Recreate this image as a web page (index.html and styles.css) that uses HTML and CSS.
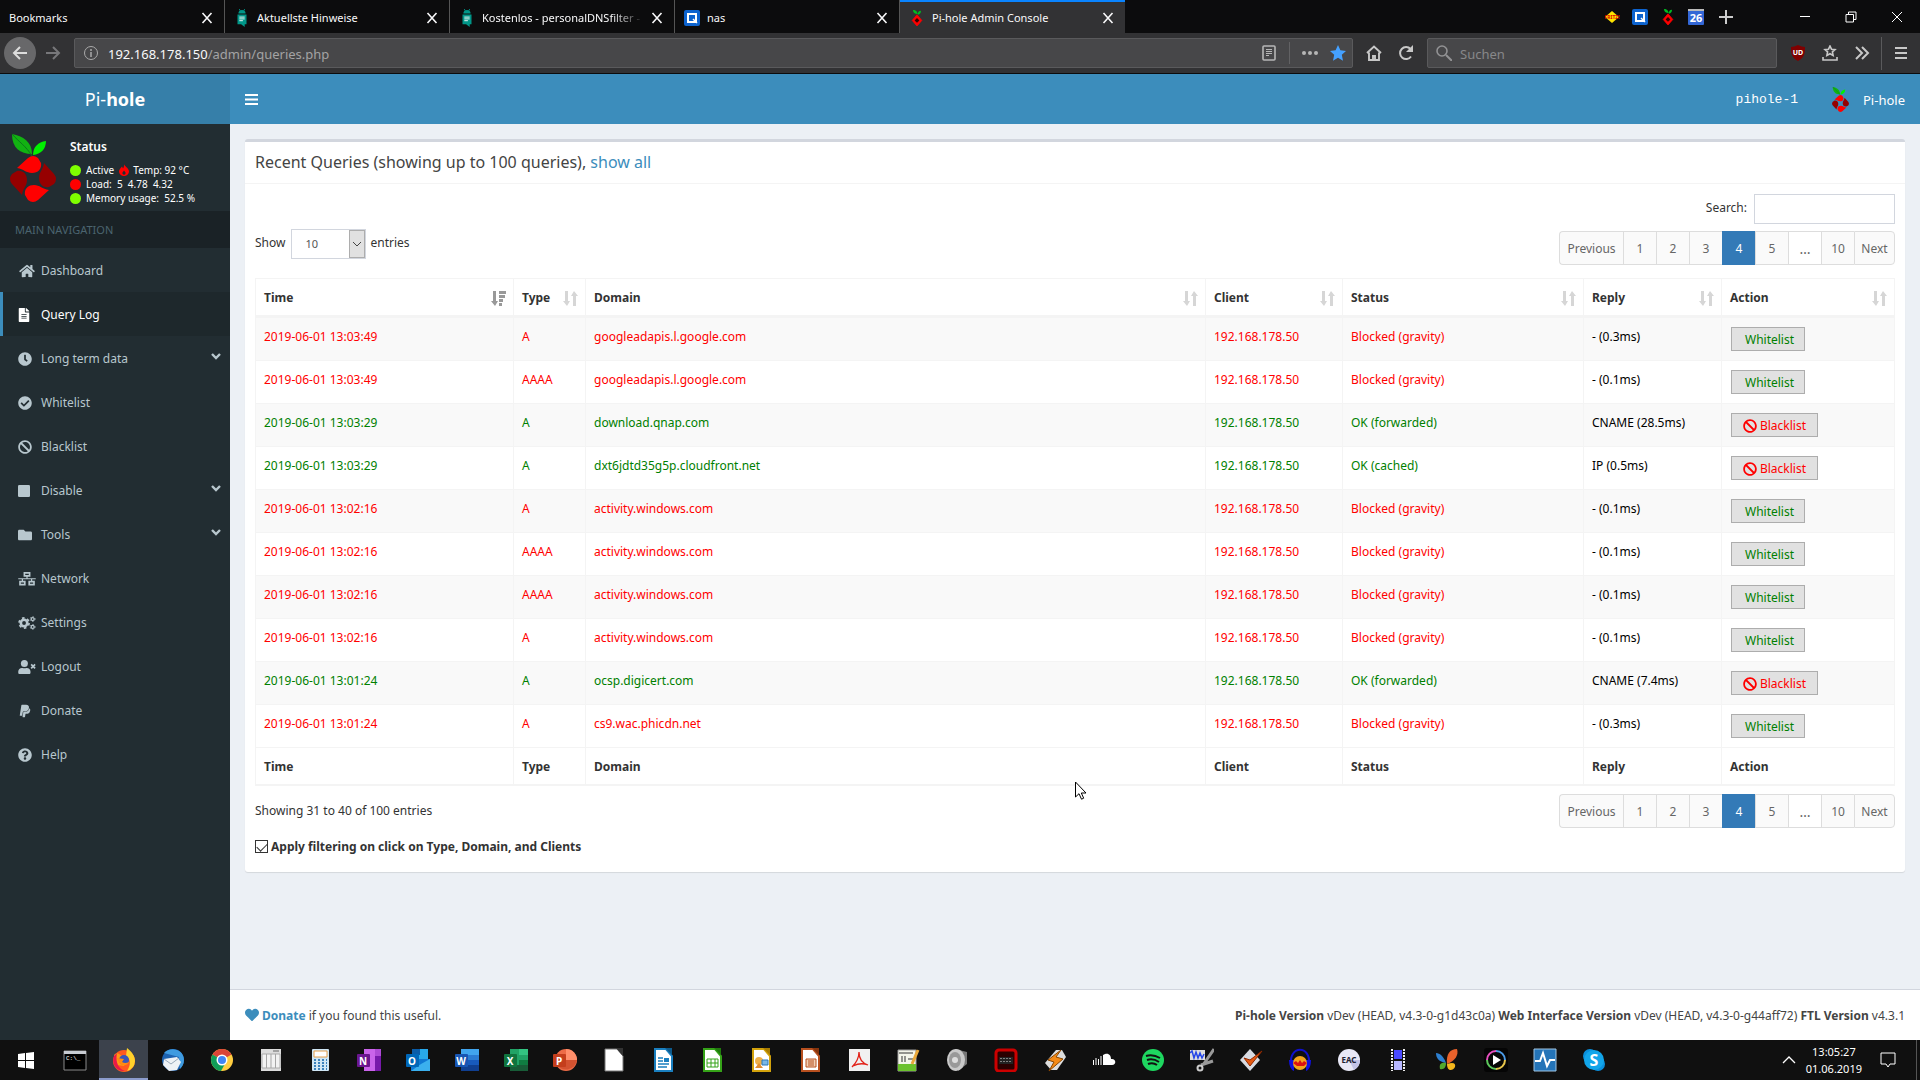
FILE: index.html
```html
<!DOCTYPE html>
<html lang="en">
<head>
  <meta charset="UTF-8">
  <title>Pi-hole Admin Console</title>
  <link rel="stylesheet" href="styles.css">
</head>
<body>
  <!-- shared icons -->
  <svg class="defs" width="0" height="0">
    <symbol id="x" viewBox="0 0 12 12"><path d="M1.500 1l9 10M10.500 1l-9 10" stroke="currentColor" stroke-width="1.600" fill="none"/></symbol>
    <symbol id="pihole" viewBox="0 0 46 68">
      <path d="M2 0c11 2 20 8 20 20C10 20 2 14 2 0z" fill="#12b212"/>
      <path d="M36 7c0 8-5 13-13 14C23 13 28 8 36 7z" fill="#00f000"/>
      <path d="M2 0c7 8 14 12 20 22" stroke="#0a7a1a" fill="none"/>
      <path id="petal" d="M7 34L18 24q5-4 10 0l3 5c1 6-3 10-9 10-6 0-8-4-15-5z" fill="#f00"/>
      <path d="M7 34L18 24q5-4 10 0l3 5c1 6-3 10-9 10-6 0-8-4-15-5z" fill="#960000" transform="rotate(90 23 45)"/>
      <path d="M7 34L18 24q5-4 10 0l3 5c1 6-3 10-9 10-6 0-8-4-15-5z" fill="#f00" transform="rotate(180 23 45)"/>
      <path d="M7 34L18 24q5-4 10 0l3 5c1 6-3 10-9 10-6 0-8-4-15-5z" fill="#960000" transform="rotate(270 23 45)"/>
    </symbol>
    <symbol id="pi-small" viewBox="0 0 16 20">
      <path d="M3 0c4 0 5 2 6 5-4 0-6-2-6-5zM13 1c0 3-1 4-4 5 0-3 1-5 4-5z" fill="#0b2"/>
      <path d="M8 6l6 7-6 7-6-7z" fill="#f00" stroke="#f00" stroke-linejoin="round"/>
      <path d="M8 10l3 3-3 3-3-3z" fill="#300"/>
    </symbol>
    <symbol id="droid" viewBox="0 0 12 20">
      <path d="M2 5q0-4 4-4t4 4zM1 6h10v11H9v3l-4-3H1z" fill="#009688"/>
      <path d="M3 0l1 2M9 0L8 2" stroke="#009688"/>
      <path d="M3 9h6M3 11h6M3 13h4" stroke="#fff"/>
    </symbol>
    <symbol id="qnap" viewBox="0 0 16 16">
      <rect width="16" height="16" rx="2" fill="#0d63ce"/>
      <path d="M4 4h8v8H4z" fill="none" stroke="#fff" stroke-width="2"/>
      <path d="M9 9l4 4" stroke="#fff" stroke-width="1.500"/>
    </symbol>
    <symbol id="home" viewBox="0 0 576 512"><path d="M280.370 148.260L96 300.110V464a16 16 0 0 0 16 16l112.060-.290a16 16 0 0 0 15.920-16V368a16 16 0 0 1 16-16h64a16 16 0 0 1 16 16v95.640a16 16 0 0 0 16 16.050L464 480a16 16 0 0 0 16-16V300L295.670 148.260a12.190 12.190 0 0 0-15.300 0zM571.600 251.470L488 182.560V44.050a12 12 0 0 0-12-12h-56a12 12 0 0 0-12 12v72.610L318.470 43a48 48 0 0 0-61 0L4.340 251.470a12 12 0 0 0-1.600 16.900l25.500 31A12 12 0 0 0 45.150 301l235.220-193.740a12.190 12.190 0 0 1 15.300 0L530.900 301a12 12 0 0 0 16.900-1.600l25.500-31a12 12 0 0 0-1.700-16.930z"/></symbol>
    <symbol id="file" viewBox="0 0 384 512"><path d="M224 136V0H24C10.700 0 0 10.700 0 24v464c0 13.300 10.700 24 24 24h336c13.300 0 24-10.700 24-24V160H248c-13.200 0-24-10.800-24-24zm64 236c0 6.600-5.400 12-12 12H108c-6.600 0-12-5.400-12-12v-8c0-6.600 5.400-12 12-12h168c6.600 0 12 5.400 12 12v8zm0-64c0 6.600-5.400 12-12 12H108c-6.600 0-12-5.400-12-12v-8c0-6.600 5.400-12 12-12h168c6.600 0 12 5.400 12 12v8zm0-72v8c0 6.600-5.400 12-12 12H108c-6.600 0-12-5.400-12-12v-8c0-6.600 5.400-12 12-12h168c6.600 0 12 5.400 12 12zm96-114.100v6.100H256V0h6.100c6.400 0 12.500 2.500 17 7l97.900 98c4.500 4.500 7 10.600 7 16.900z"/></symbol>
    <symbol id="clock" viewBox="0 0 512 512"><path d="M256 8C119 8 8 119 8 256s111 248 248 248 248-111 248-248S393 8 256 8zm92 313l-20 25a16 16 0 0 1-22 2l-67-49a40 40 0 0 1-15-31V112a16 16 0 0 1 16-16h32a16 16 0 0 1 16 16v144l58 42a16 16 0 0 1 2 23z"/></symbol>
    <symbol id="check" viewBox="0 0 512 512"><path d="M504 256c0 137-111 248-248 248S8 393 8 256 119 8 256 8s248 111 248 248zM227 387l184-184c6-6 6-16 0-22l-22-23c-7-6-17-6-23 0L216 308l-70-70c-6-6-16-6-23 0l-22 23c-6 6-6 16 0 22l104 104c6 6 16 6 22 0z"/></symbol>
    <symbol id="ban" viewBox="0 0 512 512"><path d="M256 8C119 8 8 119 8 256s111 248 248 248 248-111 248-248S393 8 256 8zm130 118c65 65 70 165 21 235L150 105c71-49 171-44 236 21zM126 386c-65-65-70-165-21-235l257 256c-71 49-171 44-236-21z"/></symbol>
    <symbol id="stop" viewBox="0 0 448 512"><rect y="32" width="448" height="448" rx="48"/></symbol>
    <symbol id="folder" viewBox="0 0 512 512"><path d="M464 128H272l-64-64H48C21 64 0 85 0 112v288c0 27 21 48 48 48h416c27 0 48-21 48-48V176c0-27-21-48-48-48z"/></symbol>
    <symbol id="network" viewBox="0 0 640 512"><path d="M224 32h192v112H224zM64 352h176v112H64zM400 352h176v112H400z" fill="none" stroke="currentColor" stroke-width="60"/><path d="M0 224h640v44H0zM298 150h44v90h-44zM130 250h44v100h-44zM466 250h44v100h-44z"/></symbol>
    <symbol id="cogs" viewBox="0 0 640 512">
      <g fill="none" stroke="currentColor">
        <circle cx="212" cy="256" r="118" stroke-width="96"/><circle cx="212" cy="256" r="184" stroke-width="62" stroke-dasharray="96 96"/>
        <circle cx="526" cy="112" r="54" stroke-width="44"/><circle cx="526" cy="112" r="86" stroke-width="34" stroke-dasharray="45 45"/>
        <circle cx="526" cy="400" r="54" stroke-width="44"/><circle cx="526" cy="400" r="86" stroke-width="34" stroke-dasharray="45 45"/>
      </g>
    </symbol>
    <symbol id="user-x" viewBox="0 0 640 512"><circle cx="224" cy="128" r="128"/><path d="M314 288h-17a174 174 0 0 1-146 0h-17C60 288 0 348 0 422v42c0 27 21 48 48 48h352c27 0 48-21 48-48v-42c0-74-60-134-134-134z"/><path d="M472 160l144 144M616 160L472 304" stroke="currentColor" stroke-width="62"/></symbol>
    <symbol id="paypal" viewBox="0 0 384 512"><path d="M111.400 295.900c-3.500 19.200-17.400 108.700-21.500 134-.3 1.800-1 2.500-3 2.500H12.300c-7.600 0-13.100-6.600-12.100-13.900L58.800 46.600c1.500-9.600 10.100-16.900 20-16.900 152.300 0 165.100-3.700 204 11.400 60.100 23.300 65.600 79.500 44 140.300-21.500 62.600-72.500 89.500-140.100 90.300-43.400.7-69.500-7-75.300 24.200zM357.100 152c-1.800-1.300-2.500-1.800-3 1.300-2 11.400-5.100 22.500-8.800 33.600-39.900 113.800-150.500 103.900-204.500 103.900-6.100 0-10.100 3.300-10.900 9.400-22.600 140.400-27.100 169.700-27.100 169.700-1 7.100 3.500 12.900 10.600 12.900h63.500c8.600 0 15.700-6.300 17.400-14.900.7-5.400-1.100 6.100 14.400-91.300 4.600-22 14.300-19.700 29.300-19.700 71 0 126.400-28.800 142.900-112.300 6.500-34.800 4.600-71.400-23.800-92.600z"/></symbol>
    <symbol id="question" viewBox="0 0 512 512"><path d="M504 256c0 137-111 248-248 248S8 393 8 256C8 119 119 8 256 8s248 111 248 248zM263 90c-55 0-90 23-117 64-4 5-2 12 3 16l35 26c5 4 12 3 16-2 18-23 30-36 57-36 21 0 46 13 46 33 0 15-12 23-33 34-23 14-54 30-54 71v4c0 7 5 12 12 12h56c7 0 12-5 12-12v-1c0-29 83-30 83-107 0-58-60-102-116-102zM256 338c-25 0-46 21-46 46s21 46 46 46 46-21 46-46-21-46-46-46z"/></symbol>
    <symbol id="heart" viewBox="0 0 512 512"><path d="M462 63C407 16 326 24 276 76l-20 20-20-20C186 24 105 16 50 63c-63 53-66 149-10 207l193 200c13 13 33 13 46 0l193-200c56-58 53-154-10-207z"/></symbol>
    <symbol id="chevron" viewBox="0 0 10 8"><path d="M1 2l4 4 4-4" stroke="currentColor" stroke-width="2.400" fill="none"/></symbol>
    <symbol id="sort" viewBox="0 0 15 15"><path d="M2 0h3v10h2l-3 5-4-5h2zM10 15h3V5h2l-4-5-3 5h2z"/></symbol>
    <symbol id="sort-desc" viewBox="0 0 15 15"><path d="M2 0h3v10h2l-3 5-4-5h2zM8 0h7v3H8zM8 4h6v3H8zM8 8h4v3H8zM8 12h3v3H8z"/></symbol>
  </svg>

  <div class="tabs">
    <div class="tab"><span>Bookmarks</span><button aria-label="Close tab"><svg><use href="#x"/></svg></button></div>
    <div class="tab"><svg class="fav droid"><use href="#droid"/></svg><span>Aktuellste Hinweise</span><button aria-label="Close tab"><svg><use href="#x"/></svg></button></div>
    <div class="tab"><svg class="fav droid"><use href="#droid"/></svg><span class="fade">Kostenlos - personalDNSfilter -</span><button aria-label="Close tab"><svg><use href="#x"/></svg></button></div>
    <div class="tab"><svg class="fav"><use href="#qnap"/></svg><span>nas</span><button aria-label="Close tab"><svg><use href="#x"/></svg></button></div>
    <div class="tab active"><svg class="fav"><use href="#pi-small"/></svg><span>Pi-hole Admin Console</span><button aria-label="Close tab"><svg><use href="#x"/></svg></button></div>
    <div class="pinned">
      <svg viewBox="0 0 16 16"><path d="M8 2l7 6-7 6-7-6z" fill="#ffe400"/><text x="8" y="10" class="t-fritz">FRITZ!</text></svg>
      <svg><use href="#qnap"/></svg>
      <svg><use href="#pi-small"/></svg>
      <svg viewBox="0 0 16 16"><rect width="16" height="16" rx="1" fill="#3367d6"/><path d="M0 0h16v2H0z" fill="#bbb"/><text x="8" y="13" class="t-cal">26</text></svg>
      <button aria-label="New tab"><svg viewBox="0 0 16 16"><path d="M8 1v14M1 8h14" stroke="#ccc" stroke-width="2"/></svg></button>
    </div>
    <div class="winctl">
      <button aria-label="Minimize"><svg viewBox="0 0 12 12"><path d="M1 5.500h10" stroke="#fff"/></svg></button>
      <button aria-label="Restore"><svg viewBox="0 0 12 12"><path d="M1 3.500h7.500v7.500H1zM3.500 3.500V1H11v7.500H8.500" fill="none" stroke="#fff"/></svg></button>
      <button aria-label="Close"><svg viewBox="0 0 12 12"><path d="M1 1l10 10M11 1L1 11" stroke="#fff"/></svg></button>
    </div>
  </div>

  <div class="toolbar">
    <button class="back" aria-label="Back"><svg viewBox="0 0 16 16"><path d="M15 8H2M8 2L2 8l6 6" fill="none" stroke="#ddd" stroke-width="2"/></svg></button>
    <button class="forward" aria-label="Forward"><svg viewBox="0 0 16 16"><path d="M1 8h13M8 2l6 6-6 6" fill="none" stroke="#77777a" stroke-width="2"/></svg></button>
    <div class="urlbar">
      <svg viewBox="0 0 16 16"><circle cx="8" cy="8" r="6.500" fill="none" stroke="#aaa"/><path d="M8 4v2M8 7v5" stroke="#aaa" stroke-width="1.500"/></svg>
      <span class="url"><b>192.168.178.150</b>/admin/queries.php</span>
      <svg class="reader" viewBox="0 0 16 16"><rect x="2" y="1" width="12" height="14" rx="1" fill="none" stroke="#b6b6b6" stroke-width="1.600"/><path d="M5 4.500h6M5 6.500h6M5 8.500h6M5 10.500h3" stroke="#b6b6b6"/></svg>
      <i class="sep"></i>
      <svg class="dots" viewBox="0 0 16 16"><g fill="#b6b6b6"><circle cx="2" cy="8" r="2"/><circle cx="8" cy="8" r="2"/><circle cx="14" cy="8" r="2"/></g></svg>
      <svg viewBox="0 0 16 16"><path d="M8 0l2.400 5.300 5.600.6-4.200 3.900 1.200 6L8 12.800 3 15.800l1.200-6L0 5.900l5.600-.6z" fill="#45a1ff"/></svg>
    </div>
    <button class="tool" aria-label="Home"><svg viewBox="0 0 16 16"><path d="M1 8l7-6.500L15 8M3 7.500V15h10V7.500M7 15v-4h2v4" fill="none" stroke="#c8c8c8" stroke-width="1.900"/></svg></button>
    <button class="tool" aria-label="Reload"><svg viewBox="0 0 16 16"><path d="M13 11.500A6 6 0 1 1 12.500 4" fill="none" stroke="#c8c8c8" stroke-width="2"/><path d="M15 0v7H8z" fill="#c8c8c8"/></svg></button>
    <label class="search">
      <svg viewBox="0 0 16 16"><circle cx="6" cy="6" r="5" fill="none" stroke="#929294" stroke-width="1.600"/><path d="M10 10l6 6" stroke="#929294" stroke-width="2"/></svg>
      <input type="text" placeholder="Suchen">
    </label>
    <div class="ext">
      <svg viewBox="0 0 16 16"><path d="M8 0q4 2 7 2c0 7-1 11-7 14C2 13 1 9 1 2q3 0 7-2z" fill="#800000"/><text x="8" y="10" class="t-ub">UD</text></svg>
      <svg viewBox="0 0 16 16"><path d="M8 1l1.500 3.200 3.500.4-2.600 2.300.7 3.500L8 8.700l-3.100 1.700.7-3.500L3 4.600l3.500-.4zM1 12v3h14v-3" fill="none" stroke="#c8c8c8" stroke-width="1.600"/></svg>
      <svg viewBox="0 0 16 16"><path d="M2 2l6 6-6 6M8 2l6 6-6 6" fill="none" stroke="#c8c8c8" stroke-width="2"/></svg>
    </div>
    <button class="menu" aria-label="Menu"><svg viewBox="0 0 16 16"><path d="M2 3h12M2 8h12M2 13h12" stroke="#c8c8c8" stroke-width="2"/></svg></button>
  </div>

  <div class="wrapper">
    <aside class="sidebar">
      <a href="#" class="logo">Pi-<b>hole</b></a>
      <div class="user-panel">
        <svg class="pi"><use href="#pihole"/></svg>
        <div class="info">
          <p>Status</p>
          <div><i class="dot green"></i>Active <svg class="fire" viewBox="0 0 10 12"><path d="M5 0c0 2 5 4 5 7.500A4.600 4.600 0 0 1 5 12 4.600 4.600 0 0 1 0 7.500C0 5 2 4 3 2.500l1 2C5 3 5 2 5 0z" fill="#f00"/><path d="M5 6.500l1.500 2a1.600 1.600 0 1 1-3 0z" fill="#222d32"/></svg> Temp: 92 °C</div>
          <div><i class="dot red"></i>Load:&nbsp; 5&nbsp; 4.78&nbsp; 4.32</div>
          <div><i class="dot green"></i>Memory usage:&nbsp; 52.5 %</div>
        </div>
      </div>
      <div class="nav-title">MAIN NAVIGATION</div>
      <nav>
        <a href="#"><svg class="wide"><use href="#home"/></svg>Dashboard</a>
        <a href="#" class="active"><svg class="thin"><use href="#file"/></svg>Query Log</a>
        <a href="#"><svg><use href="#clock"/></svg>Long term data<svg class="more"><use href="#chevron"/></svg></a>
        <a href="#"><svg><use href="#check"/></svg>Whitelist</a>
        <a href="#"><svg><use href="#ban"/></svg>Blacklist</a>
        <a href="#"><svg class="thin"><use href="#stop"/></svg>Disable<svg class="more"><use href="#chevron"/></svg></a>
        <a href="#"><svg><use href="#folder"/></svg>Tools<svg class="more"><use href="#chevron"/></svg></a>
        <a href="#"><svg class="wide"><use href="#network"/></svg>Network</a>
        <a href="#"><svg class="wide"><use href="#cogs"/></svg>Settings</a>
        <a href="#"><svg class="wide"><use href="#user-x"/></svg>Logout</a>
        <a href="#"><svg><use href="#paypal"/></svg>Donate</a>
        <a href="#"><svg><use href="#question"/></svg>Help</a>
      </nav>
    </aside>

    <div class="page">
      <header class="navbar">
        <button class="toggle" aria-label="Toggle navigation"><svg viewBox="0 0 13 11"><path d="M0 1h13M0 5.500h13M0 10h13" stroke="#fff" stroke-width="2"/></svg></button>
        <code>pihole-1</code>
        <a href="#" class="account"><svg><use href="#pihole"/></svg>Pi-hole</a>
      </header>

      <main class="content">
        <section class="box">
          <h3>Recent Queries (showing up to 100 queries), <a href="#">show all</a></h3>
          <div class="box-body">
            <div class="controls">
              <div class="length">
                <label for="len">Show</label>
                <span class="select"><select id="len"><option>10</option><option>25</option><option>100</option></select><i><svg viewBox="0 0 10 8"><path d="M1 2l4 4 4-4" stroke="#444" fill="none"/></svg></i></span>
                <label for="len">entries</label>
              </div>
              <div class="right">
                <label class="filter">Search:<input type="search"></label>
                <div class="pagination">
                  <a href="#" class="end">Previous</a><a href="#">1</a><a href="#">2</a><a href="#">3</a><a href="#" class="current">4</a><a href="#">5</a><span>…</span><a href="#">10</a><a href="#" class="end">Next</a>
                </div>
              </div>
            </div>

            <table>
              <colgroup><col class="c-time"><col class="c-type"><col><col class="c-client"><col class="c-status"><col class="c-reply"><col class="c-action"></colgroup>
              <thead>
                <tr>
                  <th><div>Time<svg class="sorted"><use href="#sort-desc"/></svg></div></th>
                  <th><div>Type<svg><use href="#sort"/></svg></div></th>
                  <th><div>Domain<svg><use href="#sort"/></svg></div></th>
                  <th><div>Client<svg><use href="#sort"/></svg></div></th>
                  <th><div>Status<svg><use href="#sort"/></svg></div></th>
                  <th><div>Reply<svg><use href="#sort"/></svg></div></th>
                  <th><div>Action<svg><use href="#sort"/></svg></div></th>
                </tr>
              </thead>
              <tbody>
                <tr class="blocked"><td>2019-06-01 13:03:49</td><td>A</td><td>googleadapis.l.google.com</td><td>192.168.178.50</td><td>Blocked (gravity)</td><td>- (0.3ms)</td><td><button class="white">Whitelist</button></td></tr>
                <tr class="blocked"><td>2019-06-01 13:03:49</td><td>AAAA</td><td>googleadapis.l.google.com</td><td>192.168.178.50</td><td>Blocked (gravity)</td><td>- (0.1ms)</td><td><button class="white">Whitelist</button></td></tr>
                <tr class="ok"><td>2019-06-01 13:03:29</td><td>A</td><td>download.qnap.com</td><td>192.168.178.50</td><td>OK (forwarded)</td><td>CNAME (28.5ms)</td><td><button class="black"><svg><use href="#ban"/></svg>Blacklist</button></td></tr>
                <tr class="ok"><td>2019-06-01 13:03:29</td><td>A</td><td>dxt6jdtd35g5p.cloudfront.net</td><td>192.168.178.50</td><td>OK (cached)</td><td>IP (0.5ms)</td><td><button class="black"><svg><use href="#ban"/></svg>Blacklist</button></td></tr>
                <tr class="blocked"><td>2019-06-01 13:02:16</td><td>A</td><td>activity.windows.com</td><td>192.168.178.50</td><td>Blocked (gravity)</td><td>- (0.1ms)</td><td><button class="white">Whitelist</button></td></tr>
                <tr class="blocked"><td>2019-06-01 13:02:16</td><td>AAAA</td><td>activity.windows.com</td><td>192.168.178.50</td><td>Blocked (gravity)</td><td>- (0.1ms)</td><td><button class="white">Whitelist</button></td></tr>
                <tr class="blocked"><td>2019-06-01 13:02:16</td><td>AAAA</td><td>activity.windows.com</td><td>192.168.178.50</td><td>Blocked (gravity)</td><td>- (0.1ms)</td><td><button class="white">Whitelist</button></td></tr>
                <tr class="blocked"><td>2019-06-01 13:02:16</td><td>A</td><td>activity.windows.com</td><td>192.168.178.50</td><td>Blocked (gravity)</td><td>- (0.1ms)</td><td><button class="white">Whitelist</button></td></tr>
                <tr class="ok"><td>2019-06-01 13:01:24</td><td>A</td><td>ocsp.digicert.com</td><td>192.168.178.50</td><td>OK (forwarded)</td><td>CNAME (7.4ms)</td><td><button class="black"><svg><use href="#ban"/></svg>Blacklist</button></td></tr>
                <tr class="blocked"><td>2019-06-01 13:01:24</td><td>A</td><td>cs9.wac.phicdn.net</td><td>192.168.178.50</td><td>Blocked (gravity)</td><td>- (0.3ms)</td><td><button class="white">Whitelist</button></td></tr>
              </tbody>
              <tfoot>
                <tr><th>Time</th><th>Type</th><th>Domain</th><th>Client</th><th>Status</th><th>Reply</th><th>Action</th></tr>
              </tfoot>
            </table>

            <div class="below">
              <span>Showing 31 to 40 of 100 entries</span>
              <div class="pagination">
                <a href="#" class="end">Previous</a><a href="#">1</a><a href="#">2</a><a href="#">3</a><a href="#" class="current">4</a><a href="#">5</a><span>…</span><a href="#">10</a><a href="#" class="end">Next</a>
              </div>
            </div>
            <label class="apply"><input type="checkbox" checked>Apply filtering on click on Type, Domain, and Clients</label>
          </div>
        </section>
      </main>

      <footer>
        <div><a href="#"><svg><use href="#heart"/></svg><b>Donate</b></a> if you found this useful.</div>
        <div><b>Pi-hole Version</b> vDev (HEAD, v4.3-0-g1d43c0a) <b>Web Interface Version</b> vDev (HEAD, v4.3-0-g44aff72) <b>FTL Version</b> v4.3.1</div>
      </footer>
    </div>
  </div>

  <div class="taskbar">
    <button aria-label="Start"><svg viewBox="0 0 24 24"><path d="M4 6l7-1v7H4zM12 5l8-1v8h-8zM4 13h7v7l-7-1zM12 13h8v8l-8-1z" fill="#fff"/></svg></button>
    <button aria-label="Command prompt"><svg viewBox="0 0 24 24"><path d="M1 3h22v19H1z" fill="#000" stroke="#8a8a8a"/><path d="M1 3h22v3H1z" fill="#c8ccd2"/><text x="3" y="12" class="t-cmd">C:\_</text></svg></button>
    <button aria-label="Firefox" class="running"><svg viewBox="0 0 24 24"><circle cx="12" cy="13" r="11" fill="#ff5a1f"/><path d="M15 0c5 4 8 8 8 13a11 11 0 0 1-8 10c4-6 4-12-1-15z" fill="#ffd12b"/><path d="M2 7c3-3 4-2 8 1l5 3-3 7-7-1z" fill="#ff9a14"/><circle cx="12" cy="12" r="5" fill="#3a56b8"/><path d="M5 10l7 1-2 3q3 2 7 0c-1 4-9 6-12-4z" fill="#ff8a10"/><path d="M2 8c-3 8 3 16 11 15C7 21 3 15 5 5z" fill="#e8194a"/></svg></button>
    <button aria-label="Thunderbird"><svg viewBox="0 0 24 24"><circle cx="12" cy="12" r="11" fill="#1d62b0"/><path d="M3 5C9-2 23 1 23 12c0 4-2 7-4 9l-1-12z" fill="#3f9be0"/><path d="M3 11l13-2 4 5-4 8-8 1-6-6z" fill="#eef2f6"/><path d="M3 11l7 5 8-6" fill="none" stroke="#9ab"/></svg></button>
    <button aria-label="Chrome"><svg viewBox="0 0 24 24"><circle cx="12" cy="12" r="11" fill="#ffcd40"/><path d="M12 12L2.500 6.500a11 11 0 0 1 19 0z" fill="#db4437"/><path d="M12 12L2.500 6.500A11 11 0 0 0 11 23l5-9z" fill="#0f9d58"/><circle cx="12" cy="12" r="5.500" fill="#fff"/><circle cx="12" cy="12" r="4" fill="#4285f4"/></svg></button>
    <button aria-label="NAS finder"><svg viewBox="0 0 24 24"><path d="M2 1h20v22H2z" fill="#dcdcdc"/><path d="M3 6h18v14H3z" fill="#f2f2f2" stroke="#aaa"/><path d="M7.500 6v14M12 6v14M16.500 6v14" stroke="#a5a5a5"/><path d="M14 3h6" stroke="#666"/></svg></button>
    <button aria-label="Calculator"><svg viewBox="0 0 24 24"><rect x="4" y="1" width="17" height="22" rx="1" fill="#cfe6f5"/><path d="M6 3h13v6H6z" fill="#fff" stroke="#e6a04d"/><path d="M6 12h13M6 15h13M6 18h13M6 21h13" stroke="#3b82bd" stroke-width="2" stroke-dasharray="2 2"/></svg></button>
    <button aria-label="OneNote"><svg viewBox="0 0 24 24"><path d="M7 1h17v22H7z" fill="#ca64ea"/><path d="M18 1h6v22h-6z" fill="#ae4bd5"/><path d="M18 8h6v15h-6z" fill="#7719aa"/><rect y="6" width="13" height="13" rx="1" fill="#6b168f"/><text x="6" y="17" class="t-app">N</text></svg></button>
    <button aria-label="Outlook"><svg viewBox="0 0 24 24"><path d="M6 1h16v10H6z" fill="#28a8ea"/><path d="M6 1h8v6H6z" fill="#0a5ca8"/><path d="M5 11h19v12H5z" fill="#0f78d4"/><path d="M5 23l10-7 9-5v12z" fill="#3bb0ee"/><rect y="6" width="13" height="13" rx="1" fill="#0067b8"/><text x="6" y="17" class="t-app">O</text></svg></button>
    <button aria-label="Word"><svg viewBox="0 0 24 24"><path d="M6 1h18v6H6z" fill="#41a5ee"/><path d="M6 7h18v5H6z" fill="#2b7cd3"/><path d="M6 12h18v5H6z" fill="#185abd"/><path d="M6 17h18v6H6z" fill="#103f91"/><rect y="6" width="13" height="13" rx="1" fill="#1855b3"/><text x="6" y="17" class="t-app">W</text></svg></button>
    <button aria-label="Excel"><svg viewBox="0 0 24 24"><path d="M6 1h18v22H6z" fill="#21a366"/><path d="M15 1h9v6h-9z" fill="#33c481"/><path d="M15 12h9v11h-9z" fill="#107c41"/><path d="M6 17h18v6H6z" fill="#185c37"/><rect y="6" width="13" height="13" rx="1" fill="#10743e"/><text x="6" y="17" class="t-app">X</text></svg></button>
    <button aria-label="PowerPoint"><svg viewBox="0 0 24 24"><circle cx="13" cy="12" r="11" fill="#ed6c47"/><path d="M13 1a11 11 0 0 1 11 11H13z" fill="#ff8f6b"/><path d="M3 12h21a11 11 0 0 1-21 3z" fill="#d35230"/><rect y="6" width="13" height="13" rx="1" fill="#c43e1c"/><text x="6" y="17" class="t-app">P</text></svg></button>
    <button aria-label="LibreOffice"><svg viewBox="0 0 24 24"><path d="M3 1h12l6 7v15H3z" fill="#fff" stroke="#777"/><path d="M14 0h7v8z" fill="#333"/></svg></button>
    <button aria-label="Writer"><svg viewBox="0 0 24 24"><path d="M4 1h11l6 7v15H4z" fill="#fff" stroke="#1a7fbf" stroke-width="2"/><path d="M14 0h7v7z" fill="#0d5a8c"/><path d="M7 10h5M7 13h5M7 16h11M7 19h9" stroke="#1a7fbf" stroke-width="1.500"/><path d="M13 10h5v4h-5z" fill="#1a7fbf"/></svg></button>
    <button aria-label="Calc"><svg viewBox="0 0 24 24"><path d="M4 1h11l6 7v15H4z" fill="#fff" stroke="#35a218" stroke-width="2"/><path d="M14 0h7v7z" fill="#1f7a0c"/><path d="M7 11h11v8H7zM7 15h11M11 11v8M15 11v8" stroke="#35a218" fill="none"/></svg></button>
    <button aria-label="Draw"><svg viewBox="0 0 24 24"><path d="M4 1h11l6 7v15H4z" fill="#fff" stroke="#d2a20c" stroke-width="2"/><path d="M14 0h7v7z" fill="#a87c00"/><circle cx="10" cy="13" r="4" fill="#eeb049"/><path d="M6 20l4-5 4 5z" fill="#e38d2c"/><path d="M13 12h6v5h-6z" fill="#7ab8e6" stroke="#2c79b5"/></svg></button>
    <button aria-label="Impress"><svg viewBox="0 0 24 24"><path d="M4 1h11l6 7v15H4z" fill="#fff" stroke="#b8501f" stroke-width="2"/><path d="M14 0h7v7z" fill="#86340c"/><path d="M8 11h10v8H8z" fill="#f1cfb5" stroke="#b8501f"/><path d="M10 13h6M10 15h6M10 17h6" stroke="#b8501f"/></svg></button>
    <button aria-label="PDF reader"><svg viewBox="0 0 24 24"><path d="M2 1h21v22H2z" fill="#f1f1f1"/><path d="M5 19c4-4 7-9 7-15 0 6 3 11 9 13-5-2-11-1-15 1" fill="none" stroke="#e2231a" stroke-width="1.300"/></svg></button>
    <button aria-label="Editor"><svg viewBox="0 0 24 24"><path d="M2 2h18v21H2z" fill="#f4f6ea" stroke="#999"/><path d="M2 16h18v7H2z" fill="#6cc22e"/><path d="M3 5h14M6 8v6M9 8v6M12 11h5" stroke="#333"/><path d="M22 2l-6 14" stroke="#e9a83a" stroke-width="3"/></svg></button>
    <button aria-label="Speaker"><svg viewBox="0 0 24 24"><path d="M10 1l12 3v12l-9 7z" fill="#777"/><ellipse cx="11" cy="12" rx="9" ry="11" fill="#c9c9c9"/><ellipse cx="10" cy="12" rx="6" ry="8" fill="#999"/><circle cx="10" cy="12" r="3" fill="#ddd"/></svg></button>
    <button aria-label="Recorder"><svg viewBox="0 0 24 24"><rect x="2" y="2" width="20" height="21" rx="3" fill="#2a0000" stroke="#c00" stroke-width="3"/><path d="M5 9h14v7H5z" fill="#222"/><path d="M6 10.500h12M6 13.500h12" stroke="#aaa" stroke-width=".700" stroke-dasharray="2 1"/></svg></button>
    <button aria-label="Winamp"><svg viewBox="0 0 24 24"><path d="M13 2h6l4 7-9 13H8l-6-7z" fill="#ddd"/><path d="M18 2L5 12l6 2-5 9 14-12-7-2z" fill="#f58a16" stroke="#8a4600"/></svg></button>
    <button aria-label="SoundCloud"><svg viewBox="0 0 24 24"><path d="M11 7c5-3 8 0 8 4 5-1 6 6 1 6h-9z" fill="#fff"/><path d="M1.500 12v5M4 10v7M6.500 11v6M9 8v9" stroke="#fff"/></svg></button>
    <button aria-label="Spotify"><svg viewBox="0 0 24 24"><circle cx="12" cy="12" r="11" fill="#1ed760"/><path d="M5 8q7-2 14 2M6 12q6-2 12 2M7 16q5-2 9 1" fill="none" stroke="#111" stroke-width="2"/></svg></button>
    <button aria-label="Wave cutter"><svg viewBox="0 0 24 24"><path d="M0 2h15v10H0z" fill="#ddd"/><path d="M0 5l2-2 2 7 2-6 2 6 2-5 2 5 2-4" fill="none" stroke="#2445e8" stroke-width="1.500"/><path d="M24 1L13 17M23 13l-12 4" stroke="#999" stroke-width="3"/><circle cx="10" cy="20" r="2.500" fill="none" stroke="#ccc" stroke-width="2"/></svg></button>
    <button aria-label="Checker"><svg viewBox="0 0 24 24"><path d="M11 1l10 11-10 11L1 12z" fill="#d8dbe2"/><path d="M5 10l6 8L23 3 11 12z" fill="#e65a12" stroke="#8f2800"/></svg></button>
    <button aria-label="Audacity"><svg viewBox="0 0 24 24"><path d="M3 16C1-3 23-3 21 16" fill="none" stroke="#11c" stroke-width="2"/><path d="M1 12h5v11q-5-2-5-11zM23 12h-5v11q5-2 5-11z" fill="#11d"/><circle cx="12" cy="15" r="7" fill="#f4a51c"/><path d="M5 15l3-2 2 2 2-3 2 3 2-2 3 2-3 3H9z" fill="#d11"/></svg></button>
    <button aria-label="EAC"><svg viewBox="0 0 24 24"><circle cx="12" cy="12" r="11" fill="#e8e8f6"/><path d="M12 12l5 10a11 11 0 0 0 6-10z" fill="#c3c3e6"/><text x="12" y="15" class="t-eac">EAC</text></svg></button>
    <button aria-label="Video"><svg viewBox="0 0 24 24"><path d="M5 1h14v22H5z" fill="#111"/><path d="M8 2h8v9H8z" fill="#4a4aff"/><path d="M8 13h8v9H8z" fill="#b6b6ff"/><path d="M6 1v22M18 1v22" stroke="#eee" stroke-width="2" stroke-dasharray="2 1"/></svg></button>
    <button aria-label="MSN"><svg viewBox="0 0 24 24"><path d="M11 15C9 9 5 5 1 5c0 6 4 9 10 10z" fill="#2d7fd0"/><path d="M12 16C11 6 15 1 22 1c2 6-2 12-10 15z" fill="#e9622b"/><path d="M11 15c-5-1-7 1-6 6 4 1 6-2 6-6z" fill="#53a82c"/><path d="M12 16c6-2 9-1 8 3-2 4-8 5-8-3z" fill="#f5b71c"/></svg></button>
    <button aria-label="Media player"><svg viewBox="0 0 24 24"><rect width="24" height="24" rx="3" fill="#050505"/><path d="M3 12a9 9 0 0 1 9-9" stroke="#e84fc0" stroke-width="2" fill="none"/><path d="M12 3a9 9 0 0 1 9 9" stroke="#4b9be8" stroke-width="2" fill="none"/><path d="M21 12a9 9 0 0 1-9 9" stroke="#e8c54b" stroke-width="2" fill="none"/><path d="M12 21a9 9 0 0 1-9-9" stroke="#5cc85c" stroke-width="2" fill="none"/><path d="M9 7l8 5-8 5z" fill="#fff"/></svg></button>
    <button aria-label="Monitor"><svg viewBox="0 0 24 24"><path d="M1 1h22v22H1z" fill="#2474b8" stroke="#9fc4e2"/><path d="M2 13h5l3-8 4 13 3-6h5" fill="none" stroke="#fff" stroke-width="2"/></svg></button>
    <button aria-label="Skype"><svg viewBox="0 0 24 24"><circle cx="8" cy="8" r="7" fill="#0a8fdc"/><circle cx="16" cy="16" r="7" fill="#0a8fdc"/><circle cx="12" cy="12" r="10" fill="#12a5ea"/><text x="12" y="18" class="t-skype">S</text></svg></button>
    <div class="tray">
      <svg viewBox="0 0 14 14"><path d="M1 10l6-6 6 6" fill="none" stroke="#fff" stroke-width="1.300"/></svg>
      <div class="time">13:05:27<br>01.06.2019</div>
      <svg class="note" viewBox="0 0 16 16"><path d="M1 1h14v11h-5l-2 3-2-3H1z" fill="none" stroke="#fff"/></svg>
      <i></i>
    </div>
  </div>

  <svg class="cursor" viewBox="0 0 12 19"><path d="M.5 1v15l3.500-3.300 2.500 5.500 2.200-1-2.400-5.200H11z" fill="#fff" stroke="#000"/></svg>
</body>
</html>
```

FILE: styles.css
```css
* { box-sizing: border-box; }
body {
  margin: 0;
  height: 100vh;
  display: flex;
  flex-direction: column;
  overflow: hidden;
  font-family: "Noto Sans", "Open Sans", sans-serif;
  font-size: 12px;
  line-height: 20px;
  color: #333;
}
svg { flex: none; fill: currentColor; }
button {
  font: inherit;
  color: inherit;
  background: none;
  border: 0;
  padding: 0;
}
a { color: #3c8dbc; text-decoration: none; }
.defs { position: absolute; }

/* browser tabs */
.tabs {
  display: flex;
  height: 33px;
  background: #0c0c0d;
  color: #f9f9fa;
  font-size: 11px;
}
.tab {
  width: 225px;
  display: flex;
  align-items: center;
  padding: 2px 11px 0 9px;
  gap: 7px;
  border-right: 1px solid #555;
}
.tab span { flex: 1; white-space: nowrap; }
.tab .fade { -webkit-mask-image: linear-gradient(to right, #000 80%, transparent); }
.tab button, .tab button svg { width: 12px; height: 12px; display: block; }
.tab .fav { width: 16px; height: 16px; }
.tab .droid { height: 18px; }
.tab.active {
  background: #323234;
  border-right: 0;
  border-top: 2px solid #0a84ff;
  padding-top: 0;
}
.pinned {
  display: flex;
  align-items: center;
  gap: 12px;
  margin-left: auto;
}
.pinned svg { width: 16px; height: 16px; display: block; }
.pinned button { margin-left: 2px; }
.winctl { display: flex; margin-left: 48px; }
.winctl button { width: 46px; display: flex; align-items: center; justify-content: center; }
.winctl svg { width: 12px; height: 12px; }
.t-fritz { font-size: 5px; font-weight: bold; fill: #d00; text-anchor: middle; }
.t-cal { font-size: 11px; font-weight: bold; fill: #fff; text-anchor: middle; }
.t-ub { font-size: 7px; font-weight: bold; fill: #fff; text-anchor: middle; }

/* browser toolbar */
.toolbar {
  display: flex;
  align-items: center;
  height: 41px;
  background: #323234;
  border-bottom: 1px solid #0c0c0d;
  padding: 0 11px 0 4px;
}
.toolbar svg { width: 16px; height: 16px; display: block; }
.back {
  width: 32px;
  height: 32px;
  border-radius: 50%;
  background: #68686a;
  padding-left: 8px;
}
.forward { width: 38px; padding-left: 9px; }
.urlbar, .search {
  display: flex;
  align-items: center;
  height: 30px;
  background: #474749;
  border: 1px solid #5a5a5c;
  border-radius: 2px;
}
.urlbar { flex: 1; padding: 0 6px 0 8px; }
.url { flex: 1; margin-left: 9px; padding-top: 1px; font-size: 13px; color: #a3a3a4; }
.url b { font-weight: normal; color: #f9f9fa; }
.sep { width: 1px; height: 22px; background: #626264; margin: 0 12px; }
.dots { margin-right: 12px; }
.tool { margin-left: 13px; }
.tool + .tool { margin-left: 16px; }
.search { width: 350px; margin-left: 13px; padding: 0 8px; gap: 8px; }
.search input {
  flex: 1;
  min-width: 0;
  border: 0;
  background: none;
  font: inherit;
  font-size: 13px;
  padding: 1px 0 0;
}
.search input::placeholder { color: #88888a; }
.ext { display: flex; gap: 16px; margin-left: 13px; }
.menu {
  height: 33px;
  border-left: 1px solid #5a5a5c;
  margin-left: 11px;
  padding-left: 11px;
}

/* page frame */
.wrapper { flex: 1; display: flex; min-height: 0; }
.sidebar { width: 230px; background: #222d32; color: #b8c7ce; }
.logo {
  display: block;
  height: 50px;
  line-height: 50px;
  background: #367fa9;
  color: #fff;
  font-size: 18px;
  text-align: center;
}
.user-panel { display: flex; height: 87px; padding: 10px; gap: 14px; color: #fff; }
.pi { width: 46px; height: 68px; }
.info { font-size: 10px; line-height: 14px; }
.info p { margin: 3px 0 6px; font-size: 12px; line-height: 20px; font-weight: 600; }
.info div { display: flex; align-items: center; white-space: pre; }
.dot { width: 11px; height: 11px; border-radius: 50%; margin-right: 5px; }
.green { background: #7fff00; }
.red { background: #f00; }
.fire { width: 10px; height: 12px; margin: 0 2px; }
.nav-title {
  height: 37px;
  line-height: 37px;
  padding-left: 15px;
  background: #1a2226;
  color: #4b646f;
  font-size: 11px;
}
nav a {
  display: flex;
  align-items: center;
  height: 44px;
  padding: 1px 9px 0 15px;
  border-left: 3px solid transparent;
  color: #b8c7ce;
}
nav svg { width: 14px; height: 14px; margin-right: 9px; }
nav .wide { width: 18px; margin-right: 5px; }
nav .thin { width: 12px; margin-right: 11px; }
nav .more { width: 10px; height: 8px; margin: 0 0 6px auto; }
nav .active { background: #1e282c; border-color: #3c8dbc; color: #fff; }

.page { flex: 1; display: flex; flex-direction: column; background: #ecf0f5; }
.navbar {
  display: flex;
  align-items: center;
  height: 50px;
  padding: 1px 15px 0;
  background: #3c8dbc;
  color: #fff;
}
.toggle { margin-right: auto; }
.toggle svg { width: 13px; height: 11px; display: block; }
.navbar code { font-family: "Liberation Mono", monospace; font-size: 13px; }
.account { display: flex; align-items: center; gap: 14px; margin-left: 34px; color: #fff; font-size: 13px; }
.account svg { width: 17px; height: 25px; }

.content { flex: 1; padding: 15px; }
.box {
  background: #fff;
  border-top: 3px solid #d2d6de;
  border-radius: 3px;
  box-shadow: 0 1px 1px rgba(0, 0, 0, 0.1);
}
.box h3 {
  margin: 0;
  padding: 10px;
  font-size: 16px;
  line-height: 21px;
  font-weight: normal;
  color: #444;
  border-bottom: 1px solid #f4f4f4;
}
.box-body { padding: 10px 10px 15px; }
.controls { display: flex; justify-content: space-between; margin-bottom: 13px; }
.length { display: flex; align-items: center; gap: 4px; height: 30px; margin-top: 35px; }
.length label { padding-bottom: 2px; }
.select { display: flex; width: 75px; height: 30px; margin-left: 2px; border: 1px solid #d2d6de; }
.select select {
  flex: 1;
  appearance: none;
  border: 0;
  background: #fff;
  padding: 0 0 0 13px;
  font: inherit;
  font-size: 11px;
  color: #555;
}
.select i {
  width: 16px;
  display: flex;
  align-items: center;
  justify-content: center;
  background: #e1e1e1;
  border: 1px solid #adadad;
}
.select svg { width: 10px; height: 8px; }
.filter { display: flex; justify-content: flex-end; gap: 7px; line-height: 28px; }
.filter input { width: 141px; height: 30px; border: 1px solid #d2d6de; }
.right .pagination { margin-top: 7px; }

.pagination { display: flex; justify-content: flex-end; }
.pagination > * {
  width: 33px;
  height: 34px;
  line-height: 34px;
  text-align: center;
  background: #fafafa;
  border: 1px solid #ddd;
  border-right: 0;
  color: #666;
}
.pagination span { background: #fff; font-size: 14px; }
.pagination .end { width: 64px; border-radius: 4px 0 0 4px; }
.pagination .end:last-child { width: 41px; border-right: 1px solid #ddd; border-radius: 0 4px 4px 0; }
.pagination .current { background: #337ab7; border-color: #337ab7; color: #fff; }

/* query table */
table {
  width: 100%;
  table-layout: fixed;
  border-spacing: 0;
  border: solid #f4f4f4;
  border-width: 1px 0 0 1px;
}
.c-time { width: 258px; }
.c-type { width: 72px; }
.c-client { width: 137px; }
.c-status { width: 241px; }
.c-reply { width: 138px; }
.c-action { width: 173px; }
th, td {
  padding: 9px 8px 7px;
  text-align: left;
  vertical-align: top;
  border: solid #f4f4f4;
  border-width: 0 1px 1px 0;
}
th { font-weight: 700; }
thead th { border-bottom-width: 3px; padding-right: 7px; }
tfoot th { border-bottom-width: 2px; }
th div { display: flex; justify-content: space-between; align-items: center; }
th svg { width: 15px; height: 15px; color: #d6d6d6; }
th .sorted { color: #999; }
td { height: 43px; }
tbody tr:nth-child(odd) { background: #f9f9f9; }
.blocked td { color: #f00; }
.ok td { color: #008000; }
tbody td:nth-child(6) { color: #000; }
td button {
  display: flex;
  align-items: center;
  justify-content: center;
  height: 24px;
  margin: 0 1px;
  padding-top: 1px;
  border: 1px solid #adadad;
  background: #e1e1e1;
}
.white { width: 74px; padding-left: 3px; color: #008000; }
.black { width: 87px; gap: 3px; color: #f00; }
td svg { width: 14px; height: 14px; }

.below { display: flex; justify-content: space-between; margin-top: 8px; }
.below > span { padding-top: 7px; }
.apply { display: flex; align-items: center; gap: 3px; margin-top: 9px; font-weight: 700; }
.apply input {
  appearance: none;
  width: 13px;
  height: 13px;
  margin: 0 0 2px;
  border: 1px solid #333;
  display: flex;
  justify-content: center;
}
.apply input:checked::after {
  content: "";
  width: 5px;
  height: 9px;
  border: solid #333;
  border-width: 0 1px 1px 0;
  transform: rotate(45deg);
}

footer {
  display: flex;
  justify-content: space-between;
  padding: 16px 15px 14px;
  background: #fff;
  border-top: 1px solid #d2d6de;
  color: #444;
}
footer b { font-weight: 700; }
footer svg { width: 14px; height: 14px; margin-right: 3px; vertical-align: -2px; }

/* windows taskbar */
.taskbar { display: flex; height: 40px; padding-left: 1px; background: #101010; color: #fff; }
.taskbar > button {
  width: 49px;
  display: flex;
  align-items: center;
  justify-content: center;
}
.taskbar button svg { width: 24px; height: 24px; }
.taskbar .running { background: #3c424c; border-bottom: 2px solid #8c9ccc; padding-top: 2px; }
.tray { display: flex; align-items: center; margin-left: auto; }
.tray > svg { width: 14px; height: 14px; }
.time { margin: 0 18px 0 10px; font-size: 11px; line-height: 17px; text-align: center; }
.tray .note { width: 16px; height: 16px; margin-right: 20px; }
.tray i { width: 4px; height: 40px; border-left: 1px solid #555; }
.t-cmd { font: 6px "Liberation Mono", monospace; fill: #fff; }
.t-app { font-size: 10px; font-weight: bold; fill: #fff; text-anchor: middle; }
.t-eac { font-size: 8px; font-weight: bold; fill: #223; text-anchor: middle; }
.t-skype { font-size: 16px; font-weight: bold; fill: #fff; text-anchor: middle; }

/* mouse pointer */
.cursor { position: absolute; left: 1075px; top: 781px; width: 12px; height: 19px; }
```
